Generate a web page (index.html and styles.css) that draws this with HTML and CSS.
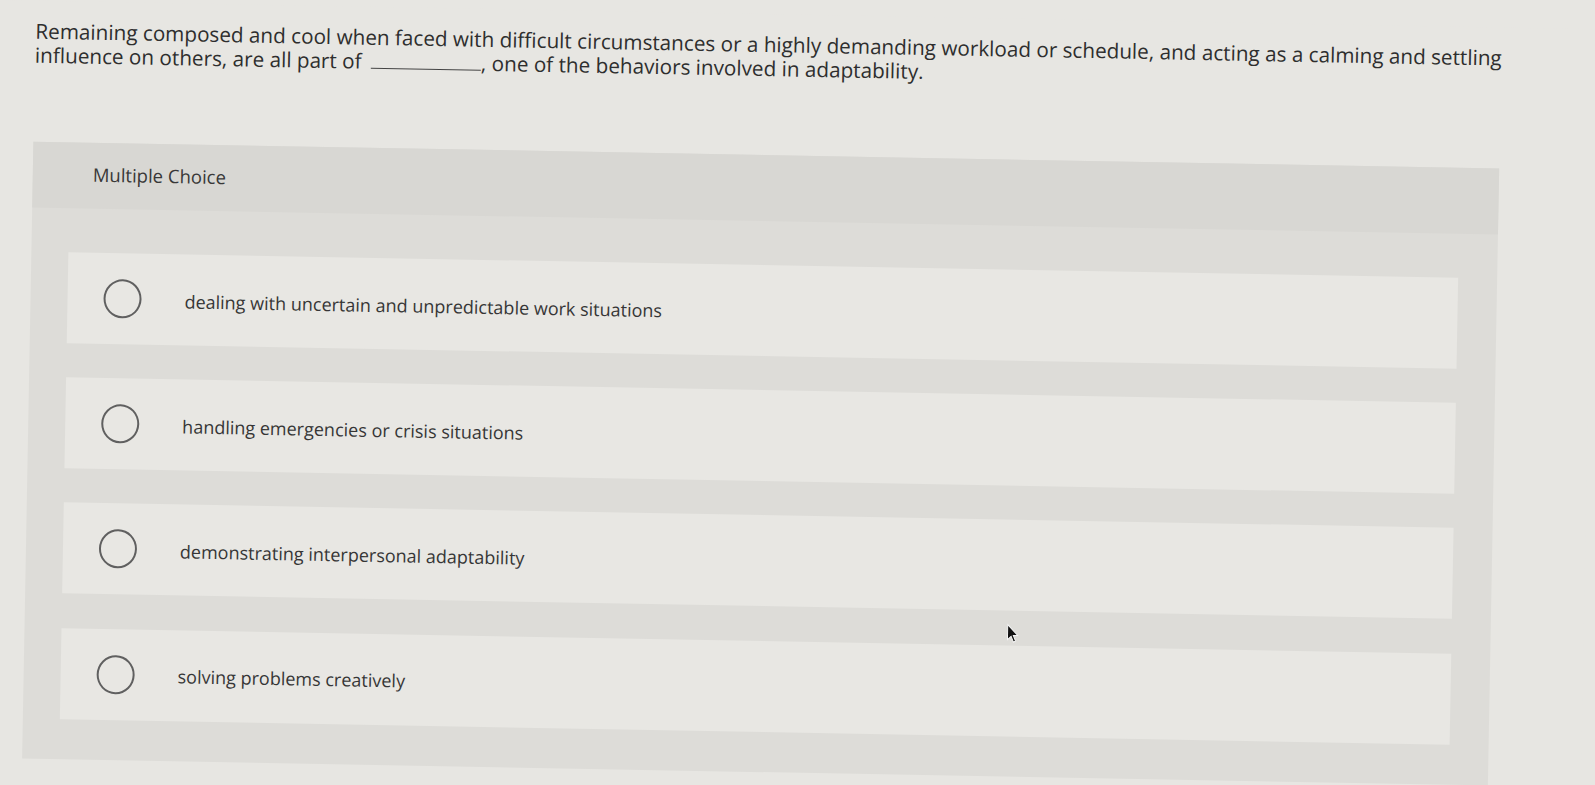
FILE: index.html
```html
<!DOCTYPE html>
<html lang="en">
<head>
<meta charset="utf-8">
<title>Multiple Choice</title>
<link rel="stylesheet" href="styles.css">
</head>
<body>
<main class="page">
  <p class="prompt">Remaining composed and cool when faced with difficult circumstances or a highly demanding workload or schedule, and acting as a calming and settling influence on others, are all part of <span class="blank"></span>, one of the behaviors involved in adaptability.</p>
  <section class="panel">
    <header class="panel-head">Multiple Choice</header>
    <ul class="choices">
      <li class="choice"><span class="radio"></span><span class="label">dealing with uncertain and unpredictable work situations</span></li>
      <li class="choice"><span class="radio"></span><span class="label">handling emergencies or crisis situations</span></li>
      <li class="choice"><span class="radio"></span><span class="label">demonstrating interpersonal adaptability</span></li>
      <li class="choice"><span class="radio"></span><span class="label">solving problems creatively</span></li>
    </ul>
  </section>
  <svg class="cursor" width="12" height="20" viewBox="0 0 12 20" aria-hidden="true"><path d="M1 1 L1 16 L4.6 12.6 L7 18.4 L9.2 17.5 L6.8 11.8 L11.4 11.8 Z" fill="#111" stroke="#f4f4f4" stroke-width="1"/></svg>
</main>
</body>
</html>
```

FILE: styles.css
```css
html, body {
  margin: 0;
  padding: 0;
  overflow: hidden;
  background: #e7e6e2;
}

body {
  font-family: "Open Sans", Lato, "Liberation Sans", sans-serif;
  color: #333;
}

.page {
  position: relative;
  box-sizing: border-box;
  width: 1595px;
  height: 785px;
  padding: 18px 0 0 36px;
  background: #e7e6e2;
  transform: rotate(1.05deg);
  transform-origin: 0 0;
  overflow: hidden;
}

.prompt {
  margin: 0;
  width: 1530px;
  font-size: 20.7px;
  line-height: 24px;
  color: #2e2e2e;
}

.blank {
  display: inline-block;
  width: 110px;
  margin-left: 4px;
  border-bottom: 1.5px solid #444;
  vertical-align: baseline;
}

.panel {
  margin-top: 75px;
  width: 1466px;
  height: 617px;
  background: #dddcd8;
}

.panel-head {
  box-sizing: border-box;
  height: 66px;
  display: flex;
  align-items: center;
  padding: 0 0 4px 60px;
  background: #d8d7d3;
  font-size: 18.5px;
  color: #383838;
}

.choices {
  list-style: none;
  margin: 0;
  padding: 44px 39px 0 37px;
  display: flex;
  flex-direction: column;
  gap: 34.2px;
}

.choice {
  box-sizing: border-box;
  height: 91px;
  display: flex;
  align-items: center;
  padding-left: 36px;
  background: #e8e7e3;
}

.radio {
  flex: none;
  box-sizing: border-box;
  width: 38px;
  height: 39px;
  border: 2px solid #606060;
  border-radius: 50%;
}

.label {
  margin-left: 43px;
  padding-top: 2px;
  font-size: 18px;
  color: #363636;
}

.cursor {
  position: absolute;
  left: 1018px;
  top: 605px;
}
```
